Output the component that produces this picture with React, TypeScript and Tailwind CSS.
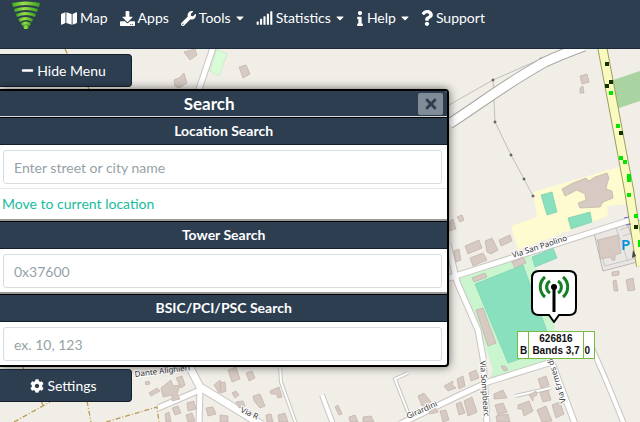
import React, { useState } from "react";
import {
  FaMap,
  FaDownload,
  FaWrench,
  FaSignal,
  FaInfo,
  FaQuestion,
  FaMinus,
  FaCog,
  FaTimes,
  FaCaretDown,
} from "react-icons/fa";

// building outlines, in map coordinates
const buildings = [
  "184,52 195,49 197,55 190,60",
  "174,80 179,78 184,73 187,83 179,88 175,86",
  "239,67 246,65 250,74 243,78",
  "580,76 587,74 589,82 582,84",
  "580,88 583,86 584,93 580,93",
  "562,189 573,183 586,178 589,181 595,177 607,173 609,178 607,184 606,189 612,191 613,198 603,202 600,207 580,208 578,203 586,200 585,194 577,190 565,196",
  "449,222 453,219 456,229 449,231",
  "457,217 462,215 464,220 460,222",
  "454,251 459,249 461,260 456,262",
  "465,246 479,240 482,248 468,254",
  "470,258 483,253 487,260 473,266",
  "485,241 492,238 498,250 491,254 487,252",
  "499,240 510,235 512,241 501,246",
  "512,262 523,257 526,263 515,268",
  "472,278 485,273 487,277 474,282",
  "476,310 483,308 496,343 488,346",
  "598,240 618,235 621,253 615,255 615,260 612,260 611,257 600,259",
  "612,272 619,271 619,275 612,276",
  "613,281 616,280 618,291 614,291",
  "626,280 633,278 635,290 628,291",
  "444,386 453,381 452,385 456,388 448,391",
  "457,379 463,376 465,386 459,389",
  "469,373 476,370 479,378 471,381",
  "494,394 503,390 507,398 494,399",
  "495,405 503,403 507,412 498,415",
  "464,401 472,397 477,412 468,416",
  "456,404 461,402 465,413 459,415",
  "440,411 446,410 449,420 443,422",
  "518,405 529,401 533,411 524,416 522,409 518,409",
  "538,379 546,376 549,385 541,388",
  "540,393 548,390 551,400 543,402",
  "529,395 536,391 537,395 533,397 533,401",
  "552,405 560,402 564,414 556,418",
  "537,410 546,406 552,421 542,422",
  "496,416 508,414 510,422 497,422",
  "501,366 505,366 508,370 504,371",
  "149,393 157,388 160,391 151,396",
  "145,382 149,381 150,384 146,385",
  "161,388 171,380 173,386 180,385 177,394 180,399 172,401 172,395 163,397",
  "176,378 182,376 185,385 181,388",
  "187,403 194,401 196,409 188,411",
  "165,414 169,412 171,422 166,422",
  "172,408 178,406 181,413 175,415",
  "186,415 192,413 195,421 188,422",
  "214,385 220,380 225,388 219,393",
  "228,370 236,367 240,379 232,382",
  "246,373 252,371 255,378 249,381",
  "220,383 225,382 226,391 221,393",
  "232,393 236,391 239,395 235,398",
  "253,396 260,394 265,406 260,408 254,401",
  "270,391 279,387 282,397 278,398 276,394 271,394",
  "236,402 243,401 245,406 239,408",
  "206,408 213,407 216,414 208,416",
  "220,415 228,416 228,422 220,422",
  "266,415 271,414 273,422 267,422",
  "278,415 285,413 288,422 279,422",
  "335,407 338,405 342,414 339,415",
  "349,417 355,415 358,422 350,422",
  "363,417 371,416 374,422 363,422",
  "418,396 424,393 431,402 422,406",
  "428,408 434,405 438,412 430,414",
];

const roads = [
  "M449 124C480 104 510 81 545 62Q560 55 584 46",
  "M214 45L198 92",
  "M446 279L640 217",
  "M448 244L457 282L478 330L483 357L487 424",
  "M400 424L460 395L488 382L555 361",
  "M549 355L560 384L575 424",
  "M592 348L606 380L624 424",
  "M188 364L200 387L228 404L262 425",
  "M158 408L200 390L199 424",
  "M280 366L281 382L296 424",
  "M322 395L333 424",
  "M408 373L395 379L411 420",
  "M515 396L551 388",
];

// [casing, fill] widths, in the order of the roads above
const roadWidths = [
  [11, 9], [7, 5], [7, 5], [7, 5], [7, 5], [7, 5], [6, 4],
  [9, 7], [7, 5], [4, 2], [6, 4], [4, 2], [4, 2],
];

const blackDots = [[605, 62], [609, 80], [605, 84], [619, 131], [634, 225]];
const greenDots = [[609, 91], [616, 124], [619, 156], [623, 160], [627, 174], [627, 178], [627, 193], [634, 214], [638, 240], [638, 243]];

function MapCanvas() {
  return (
    <svg
      viewBox="0 49 640 373"
      preserveAspectRatio="xMinYMin slice"
      className="absolute inset-0 h-full w-full"
      fontFamily="'Noto Sans', sans-serif"
      aria-hidden="true"
    >
      <rect y="49" width="640" height="373" fill="#f1eee8" />

      {/* landuse */}
      <polygon points="217,49 227,54 219,76 210,71" fill="#d8fbd8" stroke="#bfe5bf" strokeWidth="0.6" />
      <polygon points="610,81 640,71 640,101 616,109" fill="#a9d3a0" />
      <polygon points="533,192 622,166 630,204 607,206 608,216 518,250 511,226 537,217" fill="#fdfbcf" />
      <polygon points="458,279 530,254 548,300 562,357 489,383 493,370 480,330" fill="#caf5ce" />
      <polygon points="475,284 523,265 553,348 508,363" fill="#88e0be" stroke="#74ceab" strokeWidth="0.6" />
      <g fill="#88e0be" stroke="#6fc9a6" strokeWidth="0.6">
        <polygon points="541,195 552,192 557,212 547,215" />
        <polygon points="568,218 590,212 592,222 571,229" />
        <polygon points="532,257 553,248 557,258 535,267" />
      </g>
      <polygon points="594,233 627,223 641,261 603,271" fill="#e9e6e3" stroke="#b9b6b3" />
      <path d="M597 239L605 266L636 258M616 228L624 250L628 262M620 230l8-3M623 236l8-3" fill="none" stroke="#c9c6c6" />
      <path d="M449 105L493 80L541 59L568 48M493 80L495 122L511 155L524 179L533 196" fill="none" stroke="#b5b2ae" strokeWidth="0.8" />
      <path d="M492 79h2v2h-2zM540 58h3v2h-3zM494 121h2v2h-2zM510 154h2v2h-2zM523 178h2v2h-2zM532 195h2v2h-2z" fill="#666" stroke="#666" strokeWidth="0.6" />

      {/* streets: casing first, then the white fill */}
      {roads.map((d, i) => (
        <path key={d} d={d} fill="none" stroke={i === 0 ? "#aaa7a3" : "#c9c5c1"} strokeWidth={roadWidths[i][0]} />
      ))}
      {roads.map((d, i) => (
        <path key={d} d={d} fill="none" stroke="#fff" strokeWidth={roadWidths[i][1]} />
      ))}
      <path d="M602 46L629 190L634 222L641 266" fill="none" stroke="#9c9e5e" strokeWidth="10" />
      <path d="M602 46L629 190L634 222L641 266" fill="none" stroke="#f8fabf" strokeWidth="8" />

      <g fill="#d6cac3" stroke="#c0b0a9" strokeWidth="0.7">
        {buildings.map((points) => (
          <polygon key={points} points={points} />
        ))}
      </g>

      {/* footpaths */}
      <path
        d="M14 422L50 402M41 401l3 6M87 401L91 422M106 422L157 407L159 422M65 49l3 6M88 87l2 4M23 367l1 3"
        fill="none"
        stroke="#b99a50"
        strokeWidth="1.3"
        strokeDasharray="5 2 1 2"
      />

      {blackDots.map(([x, y]) => (
        <rect key={`${x}-${y}`} x={x} y={y} width="4" height="4" fill="#123300" />
      ))}
      {greenDots.map(([x, y]) => (
        <rect key={`${x}-${y}`} x={x} y={y} width="4" height="4" fill="#00e800" />
      ))}
      <path d="M624 218l5-1M626 225l5-1" stroke="#7068d8" />
      <path d="M633 250l3 6l-4 2z" fill="#444" />

      <g fill="#333" stroke="#fff" strokeWidth="2" paintOrder="stroke" fontSize="8">
        <text x="513" y="258" transform="rotate(-18 513 258)">Via San Paolino</text>
        <text x="135" y="377" transform="rotate(-7 135 377)">Dante Alighieri</text>
        <text x="240" y="412" transform="rotate(24 240 412)">Via R</text>
        <text x="408" y="419" transform="rotate(-24 408 419)">Girardini</text>
        <text x="480" y="361" transform="rotate(86 480 361)">Via Sompbearc</text>
        <text x="566" y="402" transform="rotate(-107 566 402)">Via Ermes di</text>
      </g>
      <text x="621" y="250" fontSize="15" fontWeight="600" fill="#0092da">P</text>
    </svg>
  );
}

function TowerMarker() {
  return (
    <div className="absolute left-[516px] top-[220px] flex w-20 flex-col items-center">
      <svg width="48" height="54" viewBox="0 0 48 54" className="ml-[-4px]">
        <path
          d="M9 2H39Q46 2 46 9V39Q46 46 39 46H29L24 53L19 46H9Q2 46 2 39V9Q2 2 9 2Z"
          fill="#fff"
          stroke="#000"
          strokeWidth="2"
        />
        <path
          d="M20 12A7 7 0 0 0 20 24M28 12A7 7 0 0 1 28 24M15 8A13 13 0 0 0 15 28M33 8A13 13 0 0 1 33 28"
          fill="none"
          stroke="#128023"
          strokeWidth="3"
        />
        <circle cx="24" cy="18" r="3" />
        <path d="M24 18V43" stroke="#000" strokeWidth="3" />
      </svg>
      <div className="relative mt-2 flex h-7 w-[78px] items-center justify-between border border-[#77bb41] bg-white pt-3 pr-1 pl-0.5 font-['Liberation_Sans',sans-serif] text-[10px] font-bold text-[#111]">
        <span>B</span>
        <span>0</span>
        <div className="absolute -top-px left-[10px] h-7 w-[56px] border border-[#77bb41] bg-white pt-px text-center leading-3">
          626816
          <br />
          Bands 3,7
        </div>
      </div>
    </div>
  );
}

function Logo() {
  return (
    <svg width="28" height="28" viewBox="0 0 28 28" aria-hidden="true">
      <defs>
        <linearGradient id="leaf" x1="0" x2="1">
          <stop offset="0" stopColor="#3da81c" />
          <stop offset="0.4" stopColor="#9be04a" />
          <stop offset="1" stopColor="#37a01b" />
        </linearGradient>
      </defs>
      <g fill="url(#leaf)">
        <path d="M0 2Q14-1 28 2L27 6Q14 2 1 6Z" />
        <path d="M2 8Q14 4 26 8L25 11Q14 7 3 11Z" />
        <path d="M4 13Q14 9 24 13L23 16Q14 12 5 16Z" />
        <path d="M6 18Q14 14 21 18L20 21Q14 17 8 21Z" />
        <path d="M9 22Q14 19 19 22L18 25Q14 22 10 25Z" />
        <path d="M11 25Q14 23 17 25L16 28H12Z" />
      </g>
    </svg>
  );
}

const navItems = [
  { label: "Map", icon: <FaMap className="h-[15px] w-4" /> },
  { label: "Apps", icon: <FaDownload className="h-[15px] w-[15px]" /> },
  { label: "Tools", icon: <FaWrench className="h-[15px] w-[15px]" />, menu: true },
  { label: "Statistics", icon: <FaSignal className="h-4 w-[17px]" />, menu: true },
  { label: "Help", icon: <FaInfo className="h-[15px] w-2" />, menu: true },
  { label: "Support", icon: <FaQuestion className="h-4 w-3" /> },
];

interface SectionProps {
  id: string;
  title: string;
  placeholder: string;
  children?: React.ReactNode;
}

function Section({ id, title, placeholder, children }: SectionProps) {
  const [value, setValue] = useState<string>("");

  return (
    <section>
      <h3 className="h-7 border-y border-t-black border-b-[#17202a] bg-[#2c3e50] text-center text-sm leading-[26px] font-bold text-white">
        <label htmlFor={id}>{title}</label>
      </h3>
      <div className="pt-[5px] pr-[5px] pb-1 pl-[3px]">
        <input
          id={id}
          type="text"
          value={value}
          onChange={(e) => setValue(e.target.value)}
          placeholder={placeholder}
          className="block h-[34px] w-full rounded-[3px] border border-[#d8dcde] bg-white px-[10px] text-sm text-[#2c3e50] outline-none placeholder:text-[#95a2a6]"
        />
      </div>
      {children}
    </section>
  );
}

export default function App() {
  const [open, setOpen] = useState<boolean>(true);

  return (
    <div className="flex min-h-screen flex-col font-[Lato,sans-serif] text-sm leading-5">
      <nav className="flex h-[49px] items-start border-b border-[#1b2a3a] bg-[#2c3e50] pl-3 text-white">
        <a href="#home" aria-label="Home" className="mt-px">
          <Logo />
        </a>
        <ul className="ml-[21px] flex gap-3 pt-2">
          {navItems.map((item) => (
            <li key={item.label}>
              <a href="#nav" className="flex items-center gap-[3px]">
                {item.icon}
                <span>{item.label}</span>
                {item.menu && <FaCaretDown className="ml-[2px] h-3 w-2" />}
              </a>
            </li>
          ))}
        </ul>
      </nav>

      <main className="relative flex-1 overflow-hidden">
        <MapCanvas />
        <TowerMarker />

        <div className="relative flex w-[70.2%] flex-col items-start pt-[5px]">
          <button
            onClick={() => setOpen(!open)}
            className="flex h-[33px] w-[132px] items-center justify-center gap-[3px] rounded-r border border-l-0 border-[#14202c] bg-[#2c3e50] pr-1 text-white"
          >
            <FaMinus className="h-[13px] w-[13px]" />
            {open ? "Hide Menu" : "Show Menu"}
          </button>

          {open && (
            <div className="mt-[2px] w-full overflow-hidden rounded-r border-2 border-l-0 border-black bg-white shadow-[0_0_10px_rgba(0,0,0,0.6)]">
              <div className="flex h-[26px] items-center border-b border-[#d5dade] bg-[#2c3e50] pr-1 text-white">
                <h2 className="flex-1 text-center text-[17px] leading-6 font-bold">Search</h2>
                <button
                  aria-label="Close"
                  onClick={() => setOpen(false)}
                  className="flex h-[22px] w-[25px] items-center justify-center rounded-xs bg-[#7f8b97] text-[#2c3e50]"
                >
                  <FaTimes className="h-4 w-4" />
                </button>
              </div>
              <Section id="location" title="Location Search" placeholder="Enter street or city name">
                <div className="border-t border-b-2 border-t-[#e6e6e6] border-b-[#999] pt-[5px] pb-[5px] pl-[2px]">
                  <a href="#here" className="block text-[#18bc9c]">
                    Move to current location
                  </a>
                </div>
              </Section>
              <Section id="tower" title="Tower Search" placeholder="0x37600">
                <div className="h-[2px] bg-[#999]" />
              </Section>
              <Section id="bsic" title="BSIC/PCI/PSC Search" placeholder="ex. 10, 123" />
            </div>
          )}

          <button className="mt-[2px] flex h-[33px] w-[132px] items-center justify-center gap-[3px] rounded-r border border-l-0 border-[#14202c] bg-[#2c3e50] pr-1 text-white">
            <FaCog className="h-[14px] w-[14px]" />
            Settings
          </button>
        </div>
      </main>
    </div>
  );
}
